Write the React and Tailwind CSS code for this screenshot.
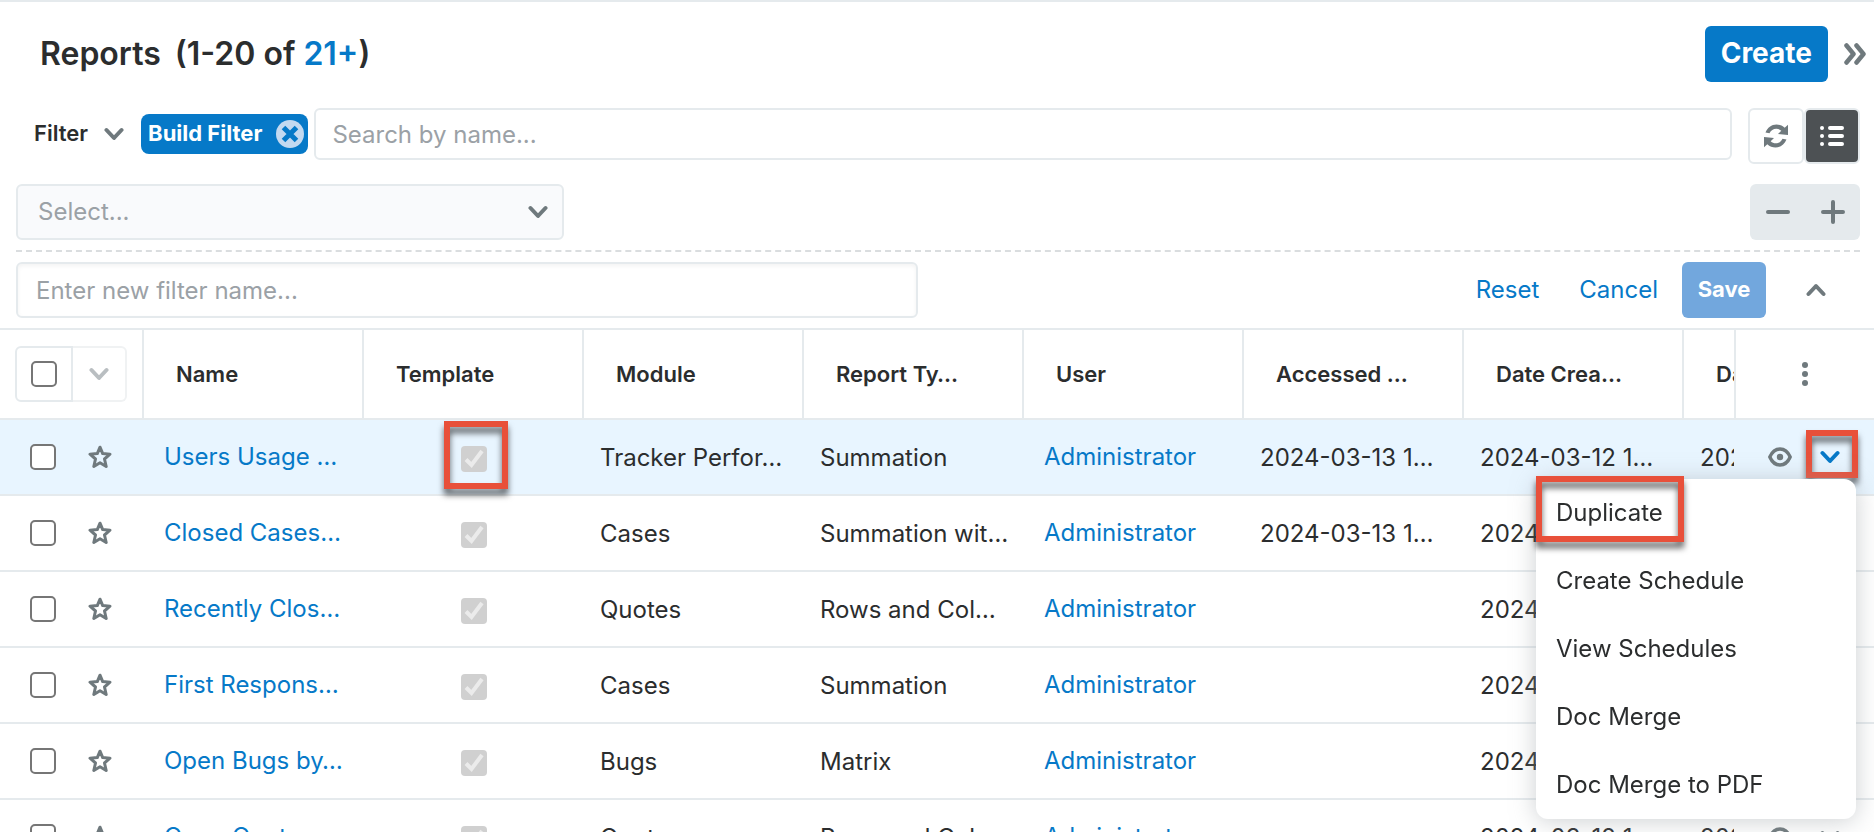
const columns = [
  "Name",
  "Template",
  "Module",
  "Report Ty…",
  "User",
  "Accessed …",
  "Date Crea…",
  "Date Modi…",
];

const reports = [
  { name: "Users Usage …", module: "Tracker Perfor…", type: "Summation", accessed: "2024-03-13 1…" },
  { name: "Closed Cases…", module: "Cases", type: "Summation wit…", accessed: "2024-03-13 1…" },
  { name: "Recently Clos…", module: "Quotes", type: "Rows and Col…", accessed: "" },
  { name: "First Respons…", module: "Cases", type: "Summation", accessed: "" },
  { name: "Open Bugs by…", module: "Bugs", type: "Matrix", accessed: "" },
  { name: "Open Quotes …", module: "Quotes", type: "Rows and Col…", accessed: "" },
];

const menuItems = [
  "Duplicate",
  "Create Schedule",
  "View Schedules",
  "Doc Merge",
  "Doc Merge to PDF",
];

function Chevron({ className = "" }) {
  return (
    <svg viewBox="0 0 20 14" className={`h-[14px] w-5 shrink-0 ${className}`} fill="none" stroke="currentColor" strokeWidth="4" strokeLinecap="round" strokeLinejoin="round" aria-hidden="true">
      <path d="M2.5 3 L10 11 L17.5 3" />
    </svg>
  );
}

function Eye() {
  return (
    <svg viewBox="0 0 24 20" className="h-5 w-6" fill="none" stroke="currentColor" strokeWidth="3.4" strokeLinejoin="round" aria-hidden="true">
      <path d="M1.8 10 C4 5 8 2 12 2 S20 5 22.2 10 C20 15 16 18 12 18 S4 15 1.8 10 Z" />
      <circle cx="12" cy="10" r="3.2" fill="currentColor" stroke="none" />
    </svg>
  );
}

function Star() {
  return (
    <svg viewBox="0 0 24 24" className="size-6" fill="none" stroke="currentColor" strokeWidth="3" strokeLinejoin="round" aria-hidden="true">
      <path d="M12 2.2 L14.7 8.6 L22 9.2 L16.5 14 L18.2 21.5 L12 17.7 L5.8 21.5 L7.5 14 L2 9.2 L9.3 8.6 Z" />
    </svg>
  );
}

function Refresh() {
  return (
    <svg viewBox="0 0 24 24" className="size-6" fill="currentColor" aria-hidden="true">
      <path d="M1.5 8.5 C3.5 3.5 7.5 0.5 12.5 0.5 C15.5 0.5 18.3 1.7 20.7 3.8 L24 0.8 V11 L14 10 L17.3 6.8 C15.8 5.5 14.2 4.7 12.3 4.7 C9.3 4.7 7 6.2 5.5 9.3 Z" />
      <path d="M22.5 15.5 C20.5 20.5 16.5 23.5 11.5 23.5 C8.5 23.5 5.7 22.3 3.3 20.2 L0 23.2 V13 L10 14 L6.7 17.2 C8.2 18.5 9.8 19.3 11.7 19.3 C14.7 19.3 17 17.8 18.5 14.7 Z" />
    </svg>
  );
}

function List() {
  return (
    <svg viewBox="0 0 24 24" className="size-6" fill="none" stroke="currentColor" strokeWidth="4" strokeLinecap="round" aria-hidden="true">
      <path d="M2 4 H2.01 M2 12 H2.01 M2 20 H2.01 M10 4 H22 M10 12 H22 M10 20 H22" />
    </svg>
  );
}

function Check({ label, checked = false }) {
  if (checked) {
    return (
      <span className="relative block size-[26px]">
        <input type="checkbox" checked disabled aria-label={label} className="block size-[26px] appearance-none rounded-[4px] bg-[#d0d0d0]" />
        <svg viewBox="0 0 26 26" className="absolute inset-0" fill="none" stroke="#ebebeb" strokeWidth="4" aria-hidden="true">
          <path d="M5 13.5 L10.5 19 L21 5" />
        </svg>
      </span>
    );
  }
  return (
    <input type="checkbox" aria-label={label} className="block size-[26px] shrink-0 appearance-none rounded-[5px] border-2 border-[#767676] bg-white" />
  );
}

// Red frame that calls out a control
function Callout({ className }) {
  return (
    <span className={`pointer-events-none absolute border-6 border-[#e8503a] drop-shadow-[0_6px_3px_rgba(0,0,0,0.6)] ${className}`} />
  );
}

function ActionMenu() {
  return (
    <ul className="absolute top-[59px] right-[18px] z-10 w-80 rounded-xl bg-white shadow-[0_2px_24px_rgba(155,161,166,0.5)]">
      {menuItems.map((item, i) => (
        <li key={item} className="relative">
          <button className="flex h-[68px] w-full items-center px-5 text-left">{item}</button>
          {i === 0 && <Callout className="-top-[3px] left-0 h-[66px] w-[148px]" />}
        </li>
      ))}
    </ul>
  );
}

function ReportRow({ report, active }) {
  const cell = `h-[76px] whitespace-nowrap border-b-2 border-[#e5eaed] p-0 ${active ? "bg-[#e8f5ff]" : "bg-white"}`;

  return (
    <tr>
      <td className={cell}>
        <div className="flex items-center gap-8 pl-[30px]">
          <Check label={`Select ${report.name}`} />
          <button aria-label="Favorite" className="text-[#6f797d]">
            <Star />
          </button>
        </div>
      </td>
      <td className={cell}>
        <a href="#" className="px-5 text-[#0679c8]">{report.name}</a>
      </td>
      <td className={cell}>
        <div className="relative mx-auto w-[26px] pt-[3px]">
          <Check label="Template" checked />
          {active && <Callout className="-top-[22px] -left-[17px] h-[68px] w-16" />}
        </div>
      </td>
      <td className={cell}><div className="px-4 pt-[2px]">{report.module}</div></td>
      <td className={cell}><div className="px-4 pt-[2px]">{report.type}</div></td>
      <td className={cell}>
        <a href="#" className="px-5 text-[#0679c8]">Administrator</a>
      </td>
      <td className={cell}><div className="px-4 pt-[2px]">{report.accessed}</div></td>
      <td className={cell}><div className="px-4 pt-[2px]">2024-03-12 1…</div></td>
      <td className={cell}><div className="px-4 pt-[2px]">2024-03-12 1…</div></td>
      <td className={`sticky right-0 h-[76px] border-b-2 border-[#e5eaed] p-0 ${active ? "z-20 bg-[#e8f5ff]" : "z-0 bg-white"}`}>
        <div className="flex items-center gap-7 pl-[34px] text-[#6f797d]">
          <button aria-label="Preview">
            <Eye />
          </button>
          <button aria-label="More actions" className={active ? "relative text-[#0679c8]" : "relative"}>
            <Chevron />
            {active && <Callout className="-top-[20px] -left-[14px] h-12 w-[52px]" />}
          </button>
        </div>
        {active && <ActionMenu />}
      </td>
    </tr>
  );
}

export default function App() {
  return (
    <div className="flex h-screen flex-col overflow-hidden border-t-2 border-[#e5eaed] bg-white font-['Inter',sans-serif] text-2xl text-[#2b2d2e]">
      {/* Title bar */}
      <header className="flex items-center pt-6 pr-2 pl-10">
        <h1 className="flex flex-1 gap-[14px] text-[32px] leading-10 font-semibold">
          <span>Reports</span>
          <span>
            (1-20 of <a href="#" className="text-[#0679c8]">21+</a>)
          </span>
        </h1>
        <button className="h-14 rounded-md bg-[#0679c8] px-4 text-[28px] font-bold text-white">Create</button>
        <button aria-label="Collapse panel" className="ml-4 text-[#6f797d]">
          <svg viewBox="0 0 22 22" className="size-[22px]" fill="none" stroke="currentColor" strokeWidth="4.5" strokeLinecap="round" strokeLinejoin="round" aria-hidden="true">
            <path d="M2.5 2.5 L9.5 11 L2.5 19.5 M12.5 2.5 L19.5 11 L12.5 19.5" />
          </svg>
        </button>
      </header>

      {/* Search row */}
      <div className="mt-[26px] flex items-start pr-[14px] pl-[34px]">
        <button className="flex h-[52px] items-center gap-4 text-[22px] font-semibold">
          Filter
          <Chevron className="text-[#6f797d]" />
        </button>
        <div className="mt-[6px] ml-[17px] flex h-10 items-center rounded-lg bg-[#0679c8] pr-1 pl-[7px] text-[22px] font-bold text-white">
          Build Filter
          <button aria-label="Remove filter" className="ml-[14px]">
            <svg viewBox="0 0 28 28" className="size-7" aria-hidden="true">
              <circle cx="14" cy="14" r="14" fill="#c3d9f0" />
              <path d="M7.5 7.5 L20.5 20.5 M20.5 7.5 L7.5 20.5" stroke="#0679c8" strokeWidth="5" />
            </svg>
          </button>
        </div>
        <input aria-label="Search" placeholder="Search by name..." className="ml-[6px] h-[52px] min-w-0 flex-1 rounded-md border-2 border-[#e5eaed] px-4 placeholder:text-[#9ba1a6]" />
        <button aria-label="Refresh" className="ml-4 flex size-14 items-center justify-center rounded-md border-2 border-[#e5eaed] text-[#6f797d]">
          <Refresh />
        </button>
        <button aria-label="List view" className="flex size-14 items-center justify-center rounded-md border-2 border-[#e5eaed] bg-[#4d5154] text-white">
          <List />
        </button>
      </div>

      {/* Filter builder */}
      <div className="mt-5 mr-[14px] ml-4 flex items-center justify-between border-b-2 border-dashed border-[#dadddf] pb-[10px]">
        <div className="relative w-[548px]">
          <select aria-label="Filter field" className="h-14 w-full appearance-none rounded-md border-2 border-[#e5eaed] bg-[#f9fafc] px-5 text-[#9ba1a6]">
            <option>Select...</option>
          </select>
          <Chevron className="pointer-events-none absolute top-[21px] right-4 text-[#6f797d]" />
        </div>
        <div className="flex h-14 items-center rounded-md bg-[#e5eaed] text-[#6f797d]">
          <button aria-label="Remove row" className="flex w-[55px] justify-center">
            <svg viewBox="0 0 24 24" className="size-6" stroke="currentColor" strokeWidth="4" strokeLinecap="round" aria-hidden="true">
              <path d="M2 12 H22" />
            </svg>
          </button>
          <button aria-label="Add row" className="flex w-[55px] justify-center">
            <svg viewBox="0 0 24 24" className="size-6" stroke="currentColor" strokeWidth="4" strokeLinecap="round" aria-hidden="true">
              <path d="M2 12 H22 M12 2 V22" />
            </svg>
          </button>
        </div>
      </div>

      <div className="flex items-center px-4 pt-[10px] pb-[10px]">
        <input aria-label="Filter name" placeholder="Enter new filter name..." className="h-14 w-[902px] rounded-md border-2 border-[#e5eaed] px-[18px] inset-shadow-sm placeholder:text-[#9ba1a6]" />
        <button className="ml-auto text-[#0679c8]">Reset</button>
        <button className="ml-10 text-[#0679c8]">Cancel</button>
        <button className="ml-6 h-14 w-[84px] rounded-md bg-[#72a7dd] text-[22px] font-bold text-white">Save</button>
        <button aria-label="Hide filter" className="mr-8 ml-10 text-[#6f797d]">
          <Chevron className="rotate-180" />
        </button>
      </div>

      {/* Report list, the last column stays pinned to the right */}
      <div className="min-h-0 flex-1 overflow-hidden border-t-2 border-[#e5eaed]">
        <table className="w-[2044px] table-fixed border-separate border-spacing-0">
          <colgroup>
            <col className="w-36" />
            {columns.map((c) => (
              <col key={c} className="w-[220px]" />
            ))}
            <col className="w-[140px]" />
          </colgroup>
          <thead>
            <tr className="text-left text-[22px]">
              <th className="h-[90px] border-r-2 border-b-2 border-[#e5eaed] p-0">
                <div className="ml-[15px] flex h-14 w-28">
                  <div className="flex w-[58px] items-center justify-center rounded-l-md border-2 border-[#e5eaed]">
                    <Check label="Select all" />
                  </div>
                  <button aria-label="Bulk actions" className="flex flex-1 items-center justify-center rounded-r-md border-y-2 border-r-2 border-[#f0f2f3] text-[#b9bec1]">
                    <Chevron />
                  </button>
                </div>
              </th>
              {columns.map((c) => (
                <th key={c} className="border-r-2 border-b-2 border-[#e5eaed] px-8 pt-[2px] pb-0 font-semibold whitespace-nowrap">
                  {c}
                </th>
              ))}
              <th className="sticky right-0 z-10 border-b-2 border-l-2 border-[#e5eaed] bg-white">
                <button aria-label="Column options" className="mx-auto block text-[#6f797d]">
                  <svg viewBox="0 0 6 24" className="h-6 w-[6px]" fill="currentColor" aria-hidden="true">
                    <circle cx="3" cy="3" r="3" />
                    <circle cx="3" cy="12" r="3" />
                    <circle cx="3" cy="21" r="3" />
                  </svg>
                </button>
              </th>
            </tr>
          </thead>
          <tbody>
            {reports.map((r, i) => (
              <ReportRow key={r.name} report={r} active={i === 0} />
            ))}
          </tbody>
        </table>
      </div>
    </div>
  );
}
